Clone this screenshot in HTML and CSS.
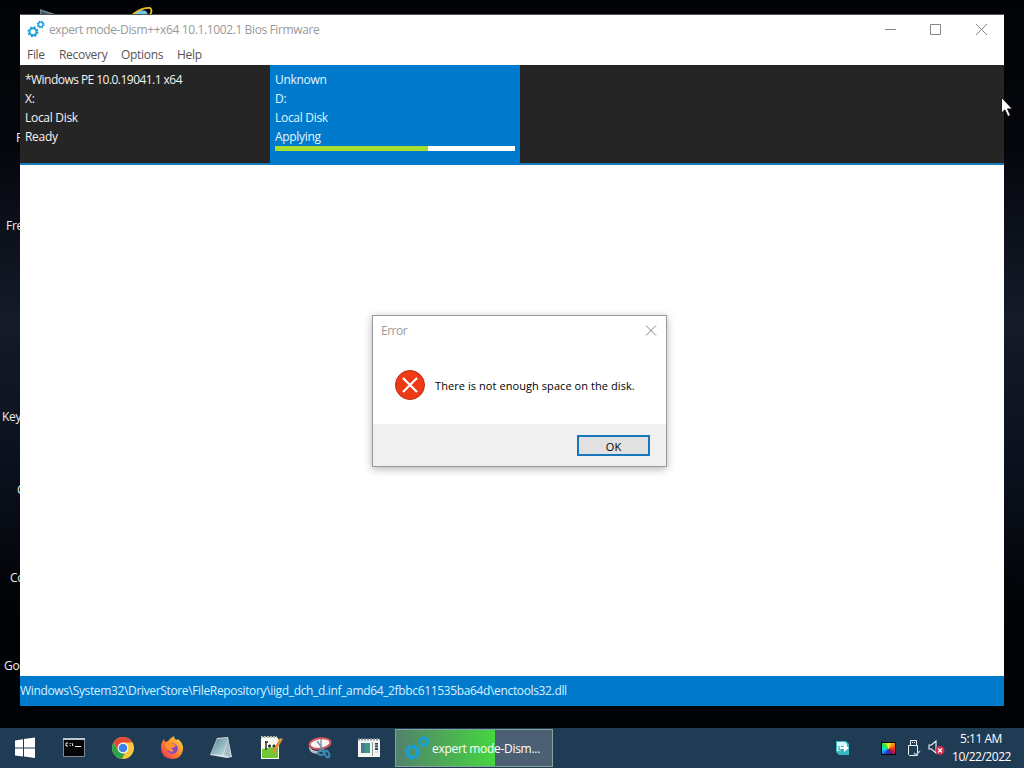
FILE: index.html
```html
<!DOCTYPE html>
<html lang="en">
<head>
  <meta charset="UTF-8" />
  <meta name="viewport" content="width=device-width, initial-scale=1.0" />
  <title>Dism++</title>
  <link rel="stylesheet" href="styles.css">
</head>
<body>

<svg class="defs" width="0" height="0">
  <defs>
    <symbol id="gears" viewBox="0 0 16 16">
      <g fill="none" stroke="#189fd8">
        <circle cx="5.3" cy="10.5" r="3.1" stroke-width="1.7" />
        <circle cx="5.3" cy="10.5" r="4.3" stroke-width="1.2" stroke-dasharray="1.7 1.68" />
        <circle cx="12.2" cy="4" r="2.1" stroke-width="1.3" />
        <circle cx="12.2" cy="4" r="3" stroke-width="1" stroke-dasharray="1.2 1.16" />
      </g>
    </symbol>
  </defs>
</svg>

<div class="desktop">
  <svg class="shortcut shortcut-bin" width="20" height="8" viewBox="0 0 20 8"><path d="M0 0 18 6v2H0z" fill="#71848c" /><path d="M1 2 13 6H1z" fill="#3c5963" /></svg>
  <svg class="shortcut shortcut-ie" width="26" height="10" viewBox="0 0 26 10"><path d="M4 10Q10 2 18 5l3 5z" fill="#70c5e8" /><path d="M4 9Q14 1 22 2q3 2 0 7" fill="none" stroke="#e8bd28" stroke-width="1.8" /></svg>
  <span class="label label-1">F</span>
  <span class="label label-2">Free</span>
  <span class="label label-3">Key</span>
  <span class="label label-4">C</span>
  <span class="label label-5">Co</span>
  <span class="label label-6">Goo</span>

  <div class="window">
    <div class="titlebar">
      <svg class="title-icon" width="18" height="18"><use href="#gears" /></svg>
      <span class="title">expert mode-Dism++x64 10.1.1002.1 Bios Firmware</span>
      <svg class="controls" width="104" height="12" viewBox="0 0 104 12" fill="none" stroke="#858585">
        <path d="M0 6.5h11M45.5 1.5h10v10h-10zM91 1l11 11M102 1 91 12" />
      </svg>
    </div>
    <div class="menu">
      <span class="menu-file">File</span>
      <span class="menu-recovery">Recovery</span>
      <span class="menu-options">Options</span>
      <span class="menu-help">Help</span>
    </div>
    <div class="systems">
      <div class="system">
        <div class="system-name">*Windows PE 10.0.19041.1 x64</div>
        <div>X:</div>
        <div>Local Disk</div>
        <div>Ready</div>
      </div>
      <div class="system active">
        <div>Unknown</div>
        <div>D:</div>
        <div>Local Disk</div>
        <div>Applying</div>
        <div class="progress"><div class="progress-bar" style="width: 153px"></div></div>
      </div>
    </div>
    <div class="content"></div>
    <div class="status"><span>Windows\System32\DriverStore\FileRepository\iigd_dch_d.inf_amd64_2fbbc611535ba64d\enctools32.dll</span></div>
  </div>

  <div class="dialog">
    <div class="dialog-title">
      <span>Error</span>
      <svg width="12" height="12" viewBox="0 0 12 12"><path d="M1 .5l10 10M11 .5l-10 10" fill="none" stroke="#858585" /></svg>
    </div>
    <div class="dialog-body">
      <svg width="30" height="30" viewBox="0 0 30 30"><circle cx="15" cy="15" r="14.5" fill="#ee3a17" stroke="#b92d17" /><path d="M8 8l14 14M22 8 8 22" stroke="#fff" stroke-width="2.2" /></svg>
      <span class="message">There is not enough space on the disk.</span>
    </div>
    <div class="dialog-footer"><button>OK</button></div>
  </div>

  <svg class="cursor" width="12" height="20" viewBox="0 0 12 20"><path d="M.5.5v15.5l3.4-3.2 3 6.6 2.5-1.1-2.9-6.4h4.8z" fill="#fff" stroke="#000" stroke-width=".8" /></svg>
</div>

<div class="taskbar">
  <div class="launchers">
    <svg width="22" height="22" viewBox="0 0 22 22"><path d="M1 3.5 9 2.3v8.2H1zM10 2.1 21 .6v9.9H10zM1 11.5h8v8.1l-8-1.1zM10 11.5h11V21l-11-1.4z" fill="#fff" /></svg>
    <svg width="24" height="22" viewBox="0 0 24 22"><path d="M1.5 1.5h21v18h-21z" fill="#050505" stroke="#7e8b91" /><path d="M1 1h22v2H1z" fill="#b9c8cf" /><path d="M6 6H4v3h2M8 6v1M8 8v1M10 6l1 3M13 9.5h6" stroke="#eee" fill="none" /></svg>
    <svg width="24" height="24" viewBox="0 0 24 24"><circle cx="12" cy="12" r="11" fill="#fac83c" /><path d="M2.5 6.5A11 11 0 0 1 21.5 6.5H12L7.2 14.8z" fill="#e34a38" /><path d="M2.5 6.5 7.2 14.8Q9 17 12 17.5h2L10.6 23A11 11 0 0 1 2.5 6.5" fill="#2ba34d" /><circle cx="12" cy="12" r="5.4" fill="#fff" /><circle cx="12" cy="12" r="4.3" fill="#3e80e5" /></svg>
    <svg width="24" height="24" viewBox="0 0 24 24"><defs><linearGradient id="fox" x1="1" y1="0" x2="0" y2="1"><stop offset="0" stop-color="#ffe646" /><stop offset=".5" stop-color="#ff852c" /><stop offset="1" stop-color="#ee2961" /></linearGradient></defs><path d="M1 12Q1 6 4 3l1 3 3-1Q10 2 14 0q0 3 3 4l1-1q6 5 5 11-2 9-11 9Q1 22 1 12" fill="url(#fox)" /><circle cx="12.5" cy="12.5" r="5.3" fill="#8547cb" /><path d="M5 7q5-2 8 1l3 1q-1 3-5 3l3 3q-3 2-6-1-3-3-3-7" fill="#ff9230" /></svg>
    <svg width="24" height="24" viewBox="0 0 24 24"><defs><linearGradient id="note" x1="0" y1="0" x2="1" y2="1"><stop offset="0" stop-color="#568493" /><stop offset="1" stop-color="#c7e4e5" /></linearGradient></defs><path d="M8 2 19 1l4 20-5 1-17-3z" fill="#d5e1e5" /><path d="M8 3 19 2l-5 17-12-1z" fill="url(#note)" /><path d="M19 2l3 19-7-2z" fill="#a7bcc5" /></svg>
    <svg width="24" height="24" viewBox="0 0 24 24"><path d="M2 1h16l2 3v19H2z" fill="#fafcf2" /><path d="M3 13q8-2 16-2v11H3z" fill="#72c832" /><path d="M7 6v8M6 6h3M9 10h3M10.5 8.5v3M13.5 10h3M15 8.5v3" fill="none" stroke="#222" stroke-width="1.4" /><path d="M14 14 21 2l3 1-8 13-3 1z" fill="#df9133" /><path d="M2 1h16" stroke="#aebbad" stroke-dasharray="2 1" stroke-width="2" /></svg>
    <svg width="26" height="24" viewBox="0 0 26 24"><path d="M2 10q4 7 12 4l-3 4Q1 17 2 10" fill="#c9bec7" /><ellipse cx="13" cy="7.5" rx="10.5" ry="5.2" fill="#f6f4f4" stroke="#d65660" stroke-width="2" transform="rotate(-8 13 7.5)" /><path d="M10 5l8 11M14 3v11" stroke="#78909c" stroke-width="1.3" /><g fill="none" stroke="#3e8aaf" stroke-width="2"><ellipse cx="14" cy="17" rx="3" ry="2" /><ellipse cx="20" cy="18" rx="2" ry="3.5" transform="rotate(-25 20 18)" /></g></svg>
    <svg width="22" height="20" viewBox="0 0 22 20"><path d="M0 1h22v18H0z" fill="#f4f6f3" /><path d="M0 1.5h22" stroke="#899ba3" stroke-dasharray="2 1" stroke-width="2" /><path d="M3 5h9v10H3z" fill="#3b9b82" /><path d="M3 5h4v10H3z" fill="#487b91" /><path d="M14.5 4v14" stroke="#8a9a9c" /><path d="M17 5h3v7h-3z" fill="#34434a" /><path d="M17 7h3M17 9.5h3M17 14h3" stroke="#b7c2bf" /></svg>
  </div>
  <div class="task">
    <svg width="26" height="26"><use href="#gears" /></svg>
    <span>expert mode-Dism...</span>
  </div>
  <div class="tray">
    <svg class="tray-sync" width="14" height="14" viewBox="0 0 14 14"><path d="M0 0h10l3 3v11H3l-3-3z" fill="#35b9c1" /><path d="M1 1h8l2 2v2H5v5H1z" fill="#d7f8f7" /><path d="M4 6h4V3l5 4-5 4V8H4z" fill="#fff" /><path d="M3 5v4h3" fill="none" stroke="#1497a4" /></svg>
    <div class="color-icon"></div>
    <svg class="tray-usb" width="14" height="17" viewBox="0 0 14 17"><path d="M3.5 5.5v-5h6v5M1.5 5.5h9v10h-8l-1-1zM5 2.5h1M7 2.5h1" fill="none" stroke="#eef3f5" /><path d="M7 13l2 2 4-4" fill="none" stroke="#adc0cb" stroke-width="1.5" /></svg>
    <svg class="tray-sound" width="17" height="16" viewBox="0 0 17 16"><path d="M1 5h2.5L8 1v12L3.5 9H1z" fill="none" stroke="#f1f5f7" stroke-width="1.1" /><circle cx="12" cy="10.5" r="4.5" fill="#d52b49" /><path d="M10 8.5l4 4M14 8.5l-4 4" stroke="#fff" stroke-width="1.2" /></svg>
    <div class="clock"><div class="time">5:11 AM</div><div class="date">10/22/2022</div></div>
  </div>
</div>

</body>
</html>
```
FILE: styles.css
```css
* {
  box-sizing: border-box;
}
body {
  margin: 0;
  width: 1024px;
  height: 768px;
  overflow: hidden;
  background: #020306;
  font-family: "Open Sans", "Noto Sans", sans-serif;
  font-size: 12px;
  letter-spacing: -0.3px;
  white-space: nowrap;
  display: flex;
  flex-direction: column;
}
svg {
  display: block;
  flex: none;
}
.defs {
  position: absolute;
}
.desktop {
  position: relative;
  height: 728px;
  flex: none;
  padding: 14px 20px 22px;
  background: linear-gradient(#020306 0, #05070d 150px, #141b29 320px, #0a101b 480px, #020307 600px, #010204 728px);
}
.shortcut, .label {
  position: absolute;
}
.shortcut-bin { left: 40px; top: 9px; }
.shortcut-ie { left: 128px; top: 6px; }
.label {
  color: #eee;
  line-height: 16px;
}
.label-1 { left: 16px; top: 130px; }
.label-2 { left: 6px; top: 218px; }
.label-3 { left: 2px; top: 409px; }
.label-4 { left: 17px; top: 482px; }
.label-5 { left: 10px; top: 570px; }
.label-6 { left: 4px; top: 658px; }
.window {
  position: relative;
  height: 692px;
  display: flex;
  flex-direction: column;
  background: #fff;
  border-top: 1px solid #555;
}
.titlebar {
  height: 30px;
  display: flex;
  align-items: center;
  padding: 0 15px 2px 7px;
  color: #999;
}
.title {
  margin-left: 4px;
  letter-spacing: -0.38px;
}
.controls {
  margin-left: auto;
}
.menu {
  height: 20px;
  display: flex;
  padding-left: 7px;
  line-height: 20px;
  color: #555;
}
.menu-file { width: 32px; }
.menu-recovery { width: 62px; }
.menu-options { width: 56px; }
.systems {
  height: 100px;
  display: flex;
  background: #252525;
  border-bottom: 2px solid #177bb9;
  color: #f4f4f4;
  line-height: 19px;
}
.system {
  width: 250px;
  height: 98px;
  padding: 5px;
}
.system-name {
  letter-spacing: -0.54px;
}
.active {
  background: #007acc;
  height: 100px;
  color: #e4f6ff;
}
.progress {
  height: 5px;
  background: #fff;
}
.progress-bar {
  height: 5px;
  background: #a5df2f;
}
.content {
  flex: 1;
}
.status {
  height: 30px;
  background: #007acc;
  color: #d8f1ff;
  line-height: 30px;
  letter-spacing: -0.35px;
}
.dialog {
  position: absolute;
  left: 372px;
  top: 315px;
  width: 295px;
  height: 152px;
  display: flex;
  flex-direction: column;
  background: #fff;
  border: 1px solid #999;
  box-shadow: 0 2px 8px rgba(0, 0, 0, 0.3);
}
.dialog-title {
  height: 29px;
  display: flex;
  align-items: center;
  justify-content: space-between;
  padding: 0 9px 0 8px;
  color: #999;
  letter-spacing: -0.5px;
}
.dialog-body {
  flex: 1;
  display: flex;
  align-items: center;
  gap: 10px;
  padding-left: 22px;
  color: #000;
}
.message {
  font-size: 11px;
  letter-spacing: 0.07px;
  padding-top: 2px;
}
.dialog-footer {
  height: 42px;
  background: #f0f0f0;
  display: flex;
  align-items: center;
  justify-content: flex-end;
  padding-right: 16px;
}
.dialog-footer button {
  width: 73px;
  height: 21px;
  padding: 0;
  border: 2px solid #1777bb;
  background: #e1e1e1;
  color: #000;
  font: inherit;
  font-size: 11px;
  line-height: 19px;
}
.cursor {
  position: absolute;
  left: 1001px;
  top: 97px;
}
.taskbar {
  height: 40px;
  flex: none;
  display: flex;
  align-items: center;
  background: #203b54;
  color: #fff;
}
.launchers {
  width: 395px;
  display: grid;
  grid-template-columns: repeat(8, 49.2px);
  align-items: center;
  justify-items: center;
}
.task {
  width: 158px;
  height: 38px;
  display: flex;
  align-items: center;
  padding-left: 8px;
  border: 1px solid #84a39b;
  background: linear-gradient(90deg, #53816c, #45d640 99px, #4c6073 99px);
}
.task span {
  margin-left: 2px;
}
.tray {
  margin-left: auto;
  display: flex;
  align-items: center;
  padding-right: 14px;
}
.tray-sync {
  margin-right: 31px;
}
.color-icon {
  width: 15px;
  height: 13px;
  margin-right: 11px;
  background: conic-gradient(#eef22b, #ff8b19, #f1202d, #6d186d, #193be7, #14d6f1, #20e838, #eef22b);
  border: 1px solid #050505;
}
.tray-usb {
  margin-right: 7px;
}
.clock {
  width: 58px;
  margin-left: 7px;
  text-align: center;
  line-height: 18px;
  letter-spacing: -0.48px;
}
```
